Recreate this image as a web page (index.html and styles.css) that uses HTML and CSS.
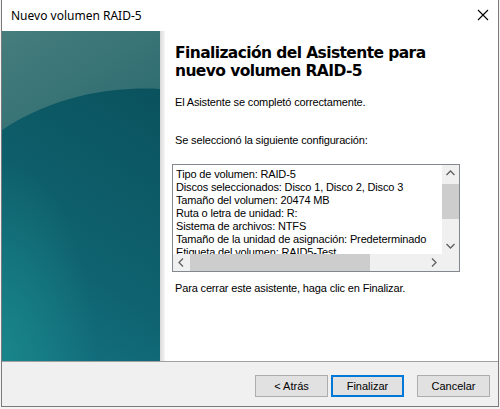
FILE: index.html
```html
<!DOCTYPE html>
<html lang="es">
<head>
<meta charset="utf-8">
<title>Nuevo volumen RAID-5</title>
<link rel="stylesheet" href="styles.css">
</head>
<body>
<div class="window">
  <div class="titlebar">
    <span class="title">Nuevo volumen RAID-5</span>
    <svg class="close" width="12" height="12" viewBox="0 0 12 12"><path d="M1 1 L11 11 M11 1 L1 11" stroke="#000" stroke-width="1.1" fill="none"/></svg>
  </div>
  <div class="main">
    <div class="sidebar">
      <svg width="158" height="330" viewBox="0 0 158 330" preserveAspectRatio="none">
        <defs>
          <linearGradient id="top" x1="0" y1="0" x2="1" y2="1">
            <stop offset="0" stop-color="#467d7d"/>
            <stop offset="1" stop-color="#2b6a6f"/>
          </linearGradient>
          <linearGradient id="bot" x1="0.3" y1="0" x2="0" y2="1">
            <stop offset="0" stop-color="#0a535e"/>
            <stop offset="0.6" stop-color="#0f6370"/>
            <stop offset="1" stop-color="#147382"/>
          </linearGradient>
          <radialGradient id="glow" cx="0" cy="1" r="0.6">
            <stop offset="0" stop-color="#1a8a8c" stop-opacity="0.8"/>
            <stop offset="1" stop-color="#1a8a8c" stop-opacity="0"/>
          </radialGradient>
        </defs>
        <rect width="158" height="330" fill="url(#bot)"/>
        <rect width="158" height="330" fill="url(#glow)"/>
        <path d="M0 0 H158 V58 C120 56 60 60 0 99 Z" fill="url(#top)"/>
      </svg>
    </div>
    <div class="shadow"></div>
    <div class="content">
      <h1 class="heading">Finalización del Asistente para nuevo volumen RAID-5</h1>
      <p class="text done">El Asistente se completó correctamente.</p>
      <p class="text sel">Se seleccionó la siguiente configuración:</p>
      <div class="listbox">
        <div class="lines">
          <div>Tipo de volumen: RAID-5</div>
          <div>Discos seleccionados: Disco 1, Disco 2, Disco 3</div>
          <div>Tamaño del volumen: 20474 MB</div>
          <div>Ruta o letra de unidad: R:</div>
          <div>Sistema de archivos: NTFS</div>
          <div>Tamaño de la unidad de asignación: Predeterminado</div>
          <div>Etiqueta del volumen: RAID5-Test</div>
        </div>
        <div class="vscroll">
          <svg class="arrow" width="17" height="17" viewBox="0 0 17 17"><path d="M4.5 10 L8.5 6 L12.5 10" stroke="#606060" stroke-width="1.3" fill="none"/></svg>
          <div class="vtrack"><div class="vthumb"></div></div>
          <svg class="arrow" width="17" height="17" viewBox="0 0 17 17"><path d="M4.5 7 L8.5 11 L12.5 7" stroke="#606060" stroke-width="1.3" fill="none"/></svg>
        </div>
        <div class="hscroll">
          <svg class="arrow" width="17" height="17" viewBox="0 0 17 17"><path d="M10 4.5 L6 8.5 L10 12.5" stroke="#606060" stroke-width="1.3" fill="none"/></svg>
          <div class="htrack"><div class="hthumb"></div></div>
          <svg class="arrow" width="17" height="17" viewBox="0 0 17 17"><path d="M7 4.5 L11 8.5 L7 12.5" stroke="#606060" stroke-width="1.3" fill="none"/></svg>
        </div>
        <div class="corner"></div>
      </div>
      <p class="text close-note">Para cerrar este asistente, haga clic en Finalizar.</p>
    </div>
  </div>
  <div class="footer">
    <button class="btn">&lt; Atrás</button>
    <button class="btn default">Finalizar</button>
    <button class="btn cancel">Cancelar</button>
  </div>
</div>
</body>
</html>
```
FILE: styles.css
```css
html, body {
  margin: 0;
  padding: 0;
  background: #f4f4f4;
}
body {
  width: 500px;
  height: 409px;
  overflow: hidden;
}
.window {
  margin-left: 1px;
  width: 496px;
  height: 406px;
  border: 1px solid #7a7a7a;
  border-top: none;
  background: #fff;
  display: flex;
  flex-direction: column;
}
.titlebar {
  height: 31px;
  display: flex;
  align-items: center;
  justify-content: space-between;
  padding: 0 9px 0 9px;
  box-sizing: border-box;
  background: #fff;
}
.title {
  font-family: "Noto Sans", sans-serif;
  font-size: 12px;
  color: #000;
  margin-top: -1px;
}
.close {
  margin-right: 0;
  margin-top: -1px;
}
.main {
  display: flex;
  height: 330px;
}
.sidebar {
  width: 158px;
  height: 330px;
  flex: none;
}
.sidebar svg {
  display: block;
}
.shadow {
  width: 5px;
  flex: none;
  background: linear-gradient(to right, #d8d8d8, #f6f6f6);
}
.content {
  flex: 1;
  padding: 13px 0 0 10px;
  font-family: "Liberation Sans", Arial, sans-serif;
  font-size: 11px;
  letter-spacing: -0.15px;
  color: #000;
}
.heading {
  margin: 0;
  font-family: "DejaVu Sans", Verdana, sans-serif;
  font-weight: bold;
  font-size: 15.5px;
  line-height: 18px;
  letter-spacing: -0.6px;
  color: #000;
  width: 300px;
}
.text {
  margin: 0;
  line-height: 13px;
}
.done {
  margin-top: 16px;
}
.sel {
  margin-top: 25px;
}
.listbox {
  position: relative;
  margin-top: 17px;
  margin-left: -3px;
  width: 288px;
  height: 108px;
  border: 1px solid #828790;
  background: #fff;
  box-sizing: border-box;
  display: grid;
  grid-template-columns: 1fr 17px;
  grid-template-rows: 1fr 17px;
  overflow: hidden;
}
.lines {
  padding: 3px 0 0 3px;
  line-height: 13px;
  white-space: nowrap;
  overflow: hidden;
}
.vscroll {
  background: #f0f0f0;
  display: flex;
  flex-direction: column;
}
.vtrack {
  flex: 1;
  position: relative;
}
.vthumb {
  position: absolute;
  left: 0;
  right: 0;
  top: 2px;
  height: 35px;
  background: #cdcdcd;
}
.hscroll {
  background: #f0f0f0;
  display: flex;
}
.htrack {
  flex: 1;
  position: relative;
}
.hthumb {
  position: absolute;
  top: 0;
  bottom: 0;
  left: 0;
  width: 180px;
  background: #cdcdcd;
}
.arrow {
  display: block;
  flex: none;
}
.corner {
  background: #f0f0f0;
}
.close-note {
  margin-top: 10px;
}
.footer {
  flex: 1;
  background: #f0f0f0;
  border-top: 1px solid #a0a0a0;
  display: flex;
  align-items: flex-start;
  padding: 13px 0 0 253px;
  box-sizing: border-box;
}
.btn {
  width: 73px;
  height: 22px;
  box-sizing: border-box;
  border: 1px solid #adadad;
  background: #e1e1e1;
  font-family: "Liberation Sans", Arial, sans-serif;
  font-size: 11px;
  color: #000;
  padding: 0;
  margin: 0 3px 0 0;
}
.btn.default {
  border: 2px solid #0078d7;
}
.btn.cancel {
  margin-left: 10px;
}
```
